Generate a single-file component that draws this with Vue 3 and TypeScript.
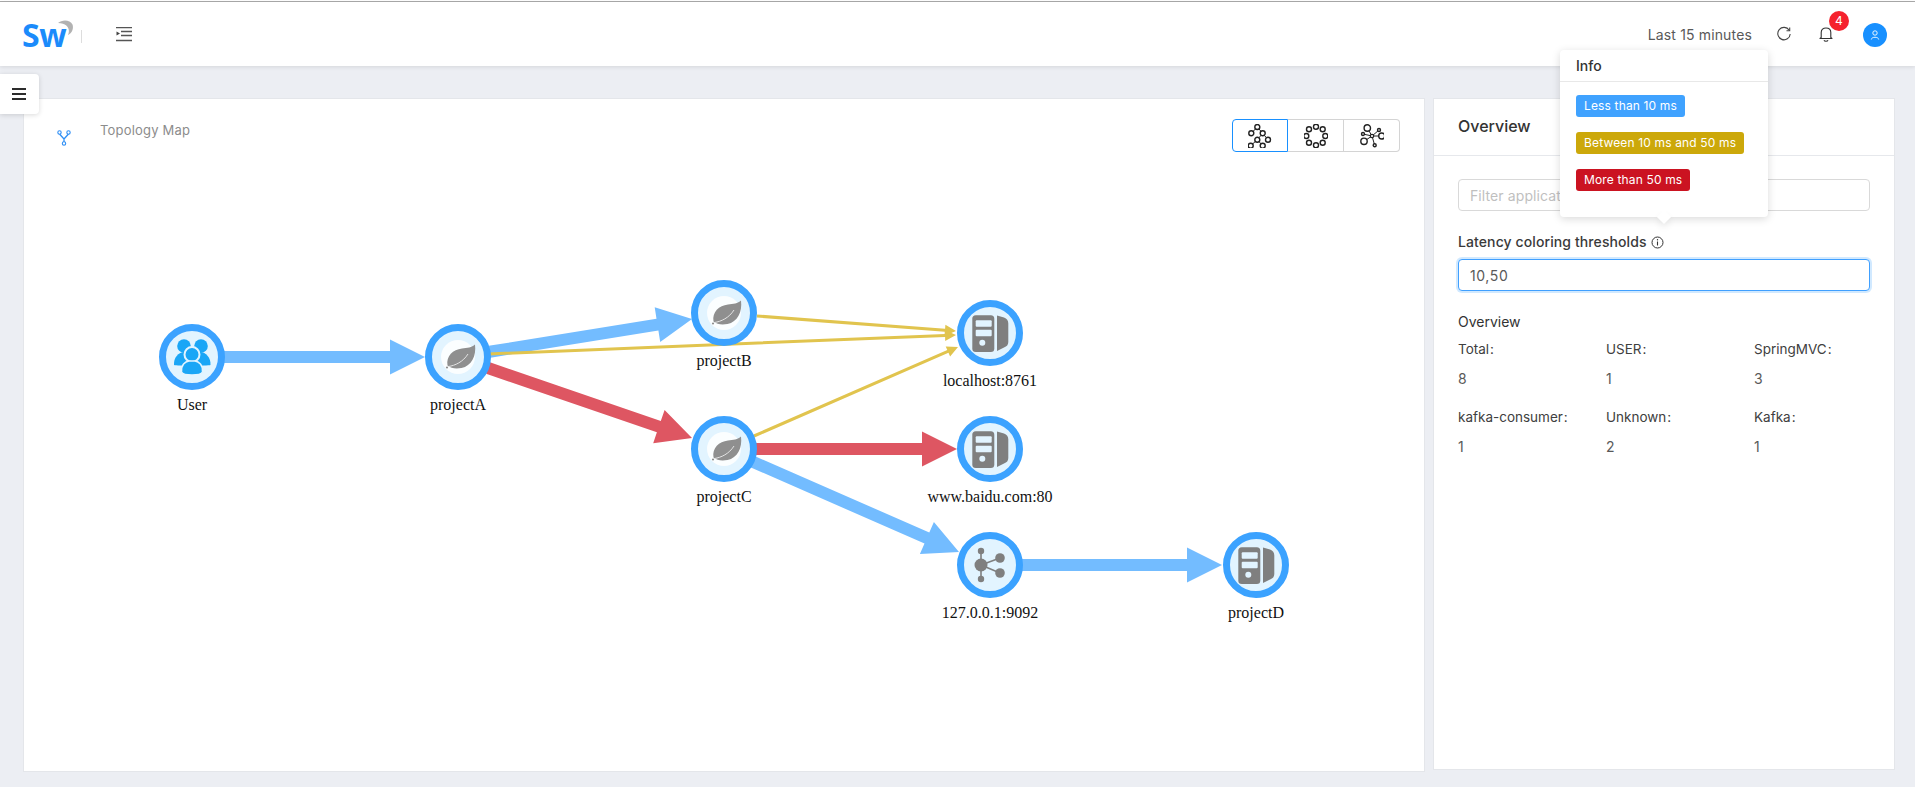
<script setup lang="ts">
type Kind = 'user' | 'leaf' | 'server' | 'kafka'
interface GraphNode { id: string; x: number; y: number; kind: Kind; ly: number }
interface Edge { x1: number; y1: number; x2: number; y2: number; c: string; w: number; hl: number; hw: number }

const blue = '#73bcff'
const red = '#de5662'
const yellow = '#e1c44e'

const nodes: GraphNode[] = [
  { id: 'User', x: 192, y: 357, kind: 'user', ly: 410 },
  { id: 'projectA', x: 458, y: 357, kind: 'leaf', ly: 410 },
  { id: 'projectB', x: 724, y: 313, kind: 'leaf', ly: 366 },
  { id: 'projectC', x: 724, y: 449, kind: 'leaf', ly: 502 },
  { id: 'localhost:8761', x: 990, y: 333, kind: 'server', ly: 386 },
  { id: 'www.baidu.com:80', x: 990, y: 449, kind: 'server', ly: 502 },
  { id: '127.0.0.1:9092', x: 990, y: 565, kind: 'kafka', ly: 618 },
  { id: 'projectD', x: 1256, y: 565, kind: 'server', ly: 618 }
]

const wide = { w: 12, hl: 35, hw: 17.5 }
const thin = { w: 3, hl: 11, hw: 5.5 }
const edges: Edge[] = [
  { x1: 222, y1: 357, x2: 425, y2: 357, c: blue, ...wide },
  { x1: 488, y1: 352, x2: 692, y2: 319, c: blue, ...wide },
  { x1: 488, y1: 368, x2: 692, y2: 438, c: red, ...wide },
  { x1: 754, y1: 449, x2: 957, y2: 449, c: red, ...wide },
  { x1: 751, y1: 461, x2: 959, y2: 552, c: blue, ...wide },
  { x1: 1020, y1: 565, x2: 1222, y2: 565, c: blue, ...wide },
  { x1: 757, y1: 316, x2: 956, y2: 331, c: yellow, ...thin },
  { x1: 488, y1: 354, x2: 956, y2: 335, c: yellow, ...thin },
  { x1: 754, y1: 436, x2: 958, y2: 347, c: yellow, ...thin }
]

function arrow(e: Edge): string {
  const dx = e.x2 - e.x1
  const dy = e.y2 - e.y1
  const len = Math.hypot(dx, dy)
  const ux = dx / len
  const uy = dy / len
  const nx = -uy
  const ny = ux
  const bx = e.x2 - ux * e.hl
  const by = e.y2 - uy * e.hl
  const p = (x: number, y: number) => `${x.toFixed(1)} ${y.toFixed(1)}`
  return `M${p(e.x1 + nx * e.w / 2, e.y1 + ny * e.w / 2)}L${p(bx + nx * e.w / 2, by + ny * e.w / 2)}L${p(bx + nx * e.hw, by + ny * e.hw)}L${p(e.x2, e.y2)}L${p(bx - nx * e.hw, by - ny * e.hw)}L${p(bx - nx * e.w / 2, by - ny * e.w / 2)}L${p(e.x1 - nx * e.w / 2, e.y1 - ny * e.w / 2)}Z`
}

const layoutA: [number, number][] = [[-2.7, -9], [-8.7, -2.7], [2.7, -2.7], [-2.7, 3.7], [8, 3.7], [-9.3, 9.7], [2.7, 9.7]]
const layoutB: [number, number][] = [[0, -9.3], [6.7, -6.7], [9.3, 0], [6.7, 6.7], [0, 9.3], [-7, 6.7], [-9.7, 0], [-7, -6.7]]
const layoutC: [number, number, number][] = [[-4.7, -8, 3.2], [9.7, 0, 3], [-8, 5.3, 3.2], [7, -6, 1.5], [-9, -2, 1.5], [2.7, 9.3, 1.5]]

const stats = [
  { k: 'Total', v: 8 }, { k: 'USER', v: 1 }, { k: 'SpringMVC', v: 3 },
  { k: 'kafka-consumer', v: 1 }, { k: 'Unknown', v: 2 }, { k: 'Kafka', v: 1 }
]
</script>

<template>
  <div class="page">
    <div class="topline"></div>
    <header class="header">
      <div class="logo">
        <span class="logo-text">Sw</span>
        <svg class="logo-arc" width="16" height="16" viewBox="0 0 16 16"><path d="M0 3 C4 -.5 12 -.5 14.500 4.500 C16 9 13.500 13.500 10 15 C12.500 9.500 10 3 0 3Z" fill="#b2b2b2" /></svg>
      </div>
      <span class="logo-div"></span>
      <svg class="indent" width="17" height="15" viewBox="0 0 17 15">
        <path d="M0 .5H16M5 4.500H16M5 8.500H16M0 13.500H16" stroke="#555" stroke-width="1.300" fill="none" />
        <path d="M.5 4.500L4 6.500L.5 8.500Z" fill="#444" />
      </svg>
      <div class="spacer"></div>
      <span class="range">Last 15 minutes</span>
      <svg class="refresh" width="16" height="16" viewBox="0 0 16 16">
        <path d="M13.200 4.200A6.200 6.200 0 1 0 14.200 8" fill="none" stroke="#444" stroke-width="1.100" />
        <path d="M13.700 1.500V4.700H10.500" fill="none" stroke="#444" stroke-width="1.100" />
      </svg>
      <div class="bell-wrap">
        <svg width="14" height="16" viewBox="0 0 14 16">
          <path d="M2.200 11.500V6.500C2.200 3.700 4.200 2 7 2S11.800 3.700 11.800 6.500V11.500L13 12.500H1Z" fill="none" stroke="#333" stroke-width="1.100" stroke-linejoin="round" />
          <path d="M5 14.200C5.500 15.500 8.500 15.500 9 14.200" fill="none" stroke="#333" stroke-width="1.100" />
        </svg>
        <span class="badge">4</span>
      </div>
      <span class="avatar">
        <svg width="10" height="10" viewBox="0 0 10 10">
          <circle cx="5" cy="3" r="2.200" fill="none" stroke="#fff" stroke-width=".9" />
          <path d="M1.300 9.500C1.500 6.500 8.500 6.500 8.700 9.500" fill="none" stroke="#fff" stroke-width=".9" />
        </svg>
      </span>
    </header>

    <button class="menu-toggle" aria-label="menu">
      <svg width="14" height="12" viewBox="0 0 14 12"><path d="M0 1H14M0 6H14M0 11H14" stroke="#2c2c2c" stroke-width="2" /></svg>
    </button>

    <main class="main">
      <section class="card map-card">
        <div class="map-head">
          <svg class="branch" width="14" height="16" viewBox="0 0 14 16">
            <path d="M2.500 4L7 9L11.500 4M7 9V12" fill="none" stroke="#2f8ff5" stroke-width="1.300" />
            <circle cx="2.500" cy="2.500" r="1.700" fill="#fff" stroke="#2f8ff5" stroke-width="1.100" />
            <circle cx="11.500" cy="2.500" r="1.700" fill="#fff" stroke="#2f8ff5" stroke-width="1.100" />
            <circle cx="7" cy="13.500" r="1.700" fill="#fff" stroke="#2f8ff5" stroke-width="1.100" />
          </svg>
          <span class="map-title">Topology Map</span>
          <div class="spacer"></div>
          <div class="btn-group">
            <button class="lay active">
              <svg width="24" height="24" viewBox="-12 -12 24 24">
                <path d="M-2.700 -9L-8.700 -2.700M-2.700 -9L2.700 -2.700M2.700 -2.700L-2.700 3.700M2.700 -2.700L8 3.700M-2.700 3.700L-9.300 9.700M-2.700 3.700L2.700 9.700" stroke="#222" stroke-width="1" fill="none" />
                <circle v-for="(p, i) in layoutA" :key="i" :cx="p[0]" :cy="p[1]" r="2.500" fill="#fff" stroke="#222" stroke-width="1.400" />
              </svg>
            </button>
            <button class="lay">
              <svg width="24" height="24" viewBox="-12 -12 24 24">
                <circle v-for="(p, i) in layoutB" :key="i" :cx="p[0]" :cy="p[1]" r="2.500" fill="#fff" stroke="#222" stroke-width="1.400" />
              </svg>
            </button>
            <button class="lay">
              <svg width="24" height="24" viewBox="-12 -12 24 24">
                <path v-for="(p, i) in layoutC" :key="i" :d="`M0 0L${p[0]} ${p[1]}`" stroke="#222" stroke-width="1" />
                <circle cx="0" cy="0" r="1.700" fill="#fff" stroke="#222" stroke-width="1.200" />
                <circle v-for="(p, i) in layoutC" :key="'c' + i" :cx="p[0]" :cy="p[1]" :r="p[2]" fill="#fff" stroke="#222" stroke-width="1.400" />
              </svg>
            </button>
          </div>
        </div>

        <svg class="graph" width="1400" height="611" viewBox="24 159 1400 611">
          <path v-for="(e, i) in edges" :key="i" :d="arrow(e)" :fill="e.c" />
          <g v-for="n in nodes" :key="n.id" :transform="`translate(${n.x} ${n.y})`">
            <circle r="29.500" fill="#e2f4ff" stroke="#3ba2ff" stroke-width="7" />
            <g v-if="n.kind === 'user'" fill="#1aa6f6">
              <circle cx="-8" cy="-11" r="6.800" />
              <circle cx="9" cy="-11" r="6.800" />
              <path d="M-18 8C-18.500 1 -14 -5 -7 -5L8 -5C14 -5 19 1 18.500 8C15 9 -15 9 -18 8Z" />
              <circle cx="0" cy="-2.500" r="7.500" stroke="#e2f4ff" stroke-width="2" />
              <path d="M-10.500 15C-11 8 -7 4.500 -3 4L3 4C7 4.500 11 8 10.500 15C9 19 -9 19 -10.500 15Z" stroke="#e2f4ff" stroke-width="1.500" />
            </g>
            <g v-else-if="n.kind === 'leaf'">
              <circle r="17" fill="#fff" opacity=".85" />
              <path d="M17 -12.500C18.500 -1 13.500 9 3.500 11C-2 12 -7 11.500 -10.500 8.500C-12 -1 -5 -7.500 4 -8.500C9 -9 14 -9.500 17 -12.500Z" fill="#8f8f8f" />
              <path d="M-9.500 9.500C-3 8.500 5 5 10 -3" fill="none" stroke="#e4e4e4" stroke-width="1" />
              <circle cx="-11" cy="10.500" r="1.100" fill="#8f8f8f" />
            </g>
            <g v-else-if="n.kind === 'server'">
              <rect x="-17.700" y="-17.700" width="22" height="36.700" rx="3.500" fill="#7f7f7f" />
              <rect x="-14.300" y="-12.700" width="16" height="6.500" rx="1" fill="#e2f4ff" />
              <rect x="-14.300" y="-3.300" width="16" height="6.500" rx="1" fill="#e2f4ff" />
              <circle cx="-7.700" cy="9.700" r="3" fill="#e2f4ff" />
              <path d="M7 -17.500L14 -15.500Q18.300 -14 18.300 -9.500V9Q18.300 13 14 14.500L7 18Z" fill="#7f7f7f" />
            </g>
            <g v-else fill="#7f7f7f">
              <path d="M-9 -14V14M-9 0L10 -7M-9 0L10 8" stroke="#7f7f7f" stroke-width="1.600" />
              <circle cx="-9" cy="0" r="6.500" />
              <circle cx="-9" cy="-14" r="3.200" />
              <circle cx="-9" cy="14" r="3.200" />
              <circle cx="10" cy="-7" r="4.800" />
              <circle cx="10" cy="8" r="4.800" />
            </g>
            <text class="node-label" x="0" :y="n.ly - n.y" text-anchor="middle">{{ n.id }}</text>
          </g>
        </svg>
      </section>

      <aside class="card side-card">
        <div class="side-head">Overview</div>
        <div class="side-body">
          <input class="field" placeholder="Filter application" />
          <div class="label">
            Latency coloring thresholds
            <svg width="13" height="13" viewBox="0 0 13 13">
              <circle cx="6.500" cy="6.500" r="5.500" fill="none" stroke="#333" stroke-width="1" />
              <path d="M6.500 5.500V9.500" stroke="#333" stroke-width="1.100" />
              <circle cx="6.500" cy="3.800" r=".7" fill="#333" />
            </svg>
          </div>
          <input class="field focus" value="10,50" />
          <div class="ov-title">Overview</div>
          <div class="stats">
            <div v-for="s in stats" :key="s.k" class="stat">
              <div class="stat-k">{{ s.k }}<span class="colon">:</span></div>
              <div class="stat-v">{{ s.v }}</div>
            </div>
          </div>
        </div>
      </aside>
    </main>

    <div class="pop">
      <div class="pop-title">Info</div>
      <div class="pop-body">
        <span class="tag t-blue">Less than 10 ms</span>
        <span class="tag t-yellow">Between 10 ms and 50 ms</span>
        <span class="tag t-red">More than 50 ms</span>
      </div>
    </div>
  </div>
</template>

<style scoped>
.page {
  position: relative;
  height: 787px;
  background: #eceef3;
  font-family: Inter, "Liberation Sans", sans-serif;
  color: #333;
  overflow: hidden;
}
.topline {
  height: 2px;
  background: #fff;
  border-bottom: 1px solid #aaa;
  box-sizing: border-box;
}
.header {
  height: 64px;
  background: #fff;
  display: flex;
  align-items: center;
  box-shadow: 0 1px 4px rgba(0, 0, 0, 0.1);
  position: relative;
}
.logo {
  position: relative;
  width: 52px;
  margin-left: 22px;
  height: 30px;
  margin-top: 2px;
}
.logo-text {
  font-family: "Open Sans", sans-serif;
  font-weight: 700;
  font-size: 32px;
  line-height: 30px;
  color: #1b8bfb;
  letter-spacing: -0.5px;
}
.logo-arc {
  position: absolute;
  left: 36px;
  top: 0;
}
.logo-div {
  width: 1px;
  height: 13px;
  background: #ddd;
  margin-left: 7px;
  margin-top: 4px;
}
.indent {
  margin-left: 34px;
}
.spacer {
  flex: 1;
}
.range {
  font-size: 14px;
  color: #595959;
  letter-spacing: 0.15px;
}
.refresh {
  margin-left: 24px;
}
.bell-wrap {
  position: relative;
  margin-left: 27px;
  line-height: 0;
}
.badge {
  position: absolute;
  left: 10px;
  top: -15px;
  width: 20px;
  height: 20px;
  border-radius: 50%;
  background: #f5222d;
  color: #fff;
  font-size: 12px;
  line-height: 20px;
  text-align: center;
}
.avatar {
  width: 24px;
  height: 24px;
  border-radius: 50%;
  background: #1890ff;
  display: flex;
  align-items: center;
  justify-content: center;
  margin-left: 30px;
  margin-right: 28px;
  margin-top: 2px;
}
.menu-toggle {
  position: absolute;
  left: 0;
  top: 74px;
  width: 39px;
  height: 40px;
  border: 0;
  border-radius: 0 4px 4px 0;
  background: #fff;
  box-shadow: 0 1px 5px rgba(0, 0, 0, 0.15);
  display: flex;
  align-items: center;
  justify-content: center;
  padding: 0 2px 0 0;
  z-index: 3;
}
.main {
  display: flex;
  align-items: flex-start;
  gap: 8px;
  padding: 32px 20px 16px 23px;
}
.card {
  background: #fff;
  border: 1px solid #e4e6ea;
  box-sizing: border-box;
}
.map-card {
  width: 1402px;
  height: 674px;
  flex: none;
}
.map-head {
  height: 60px;
  display: flex;
  align-items: flex-start;
  padding-left: 33px;
  padding-right: 24px;
  box-sizing: border-box;
}
.branch {
  margin-top: 31px;
}
.map-title {
  margin-left: 29px;
  margin-top: 23px;
  font-size: 13px;
  color: #8c8c8c;
  letter-spacing: 0.2px;
}
.btn-group {
  margin-top: 20px;
  display: flex;
  height: 33px;
}
.lay {
  width: 56px;
  height: 33px;
  padding: 0;
  background: #fff;
  border: 1px solid #d4d4d4;
  border-left-width: 0;
  display: flex;
  align-items: center;
  justify-content: center;
}
.lay:last-child {
  border-radius: 0 4px 4px 0;
}
.lay.active {
  border: 1px solid #1890ff;
  border-radius: 4px 0 0 4px;
}
.graph {
  display: block;
}
.node-label {
  font-family: "Liberation Serif", serif;
  font-size: 16px;
  fill: #111;
}
.side-card {
  width: 462px;
  height: 672px;
  flex: none;
}
.side-head {
  height: 57px;
  padding: 17px 24px 0;
  box-sizing: border-box;
  font-size: 16px;
  font-weight: 500;
  color: #333;
  border-bottom: 1px solid #e6e8ec;
}
.side-body {
  padding: 23px 24px 0;
}
.field {
  display: block;
  width: 412px;
  height: 32px;
  box-sizing: border-box;
  border: 1px solid #d9d9d9;
  border-radius: 4px;
  padding: 0 11px;
  font: 14px Inter, "Liberation Sans", sans-serif;
  letter-spacing: 0.1px;
  color: #595959;
  outline: none;
  background: #fff;
}
.field::placeholder {
  color: #bfbfbf;
}
.field.focus {
  border-color: #40a0ff;
  box-shadow: 0 0 0 2px rgba(24, 144, 255, 0.2);
  letter-spacing: 0.6px;
}
.label {
  margin-top: 22px;
  height: 26px;
  font-size: 14px;
  font-weight: 500;
  letter-spacing: 0.1px;
  color: #3a3a3a;
  display: flex;
  gap: 4px;
  align-items: flex-start;
  line-height: 18px;
}
.label svg {
  margin-top: 3px;
}
.ov-title {
  margin-top: 22px;
  font-size: 14px;
  line-height: 18px;
  color: #333;
}
.stats {
  display: grid;
  grid-template-columns: repeat(3, 148px);
  margin-top: 9px;
  row-gap: 20px;
}
.stat-k {
  font-size: 13.5px;
  line-height: 18px;
  color: #404040;
}
.colon {
  margin-left: 1px;
}
.stat-v {
  font-size: 14px;
  line-height: 18px;
  margin-top: 12px;
  color: #595959;
}
.pop {
  position: absolute;
  left: 1560px;
  top: 50px;
  width: 208px;
  height: 167px;
  background: #fff;
  border-radius: 4px;
  box-shadow: 0 2px 8px rgba(0, 0, 0, 0.15);
  z-index: 4;
}
.pop::after {
  content: "";
  position: absolute;
  left: 99px;
  bottom: -5px;
  width: 10px;
  height: 10px;
  background: #fff;
  transform: rotate(45deg);
  box-shadow: 3px 3px 7px rgba(0, 0, 0, 0.07);
}
.pop-title {
  height: 32px;
  box-sizing: border-box;
  line-height: 32px;
  padding-left: 16px;
  font-size: 14px;
  font-weight: 500;
  color: #333;
  border-bottom: 1px solid #e8e8e8;
}
.pop-body {
  display: flex;
  flex-direction: column;
  align-items: flex-start;
  gap: 15px;
  padding: 13px 16px;
}
.tag {
  height: 22px;
  line-height: 22px;
  padding: 0 8px;
  border-radius: 3px;
  font-size: 12px;
  letter-spacing: 0.15px;
  color: #fff;
}
.t-blue { background: #3fa2ff; }
.t-yellow { background: #cca80a; }
.t-red { background: #cb1321; }
</style>
<style>
body { margin: 0; }
</style>
